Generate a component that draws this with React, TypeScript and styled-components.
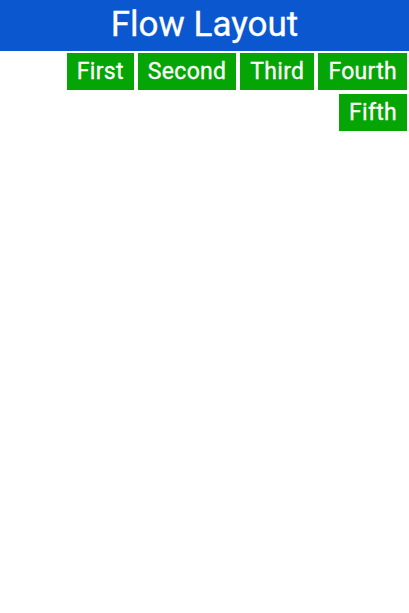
import React from "react";
import styled, { createGlobalStyle } from "styled-components";

const Global = createGlobalStyle`
  html, body { margin: 0; padding: 0; background: #ffffff; }
  body { font-family: Roboto, "Noto Sans", sans-serif; }
`;

const Header = styled.header`
  height: 51px;
  background: #0b57d0;
  color: #ffffff;
  display: flex;
  align-items: center;
  justify-content: center;
  font-size: 35px;
  font-weight: 400;
  line-height: 1;
  padding-bottom: 2px;
  box-sizing: border-box;
  -webkit-text-stroke: 0.3px #ffffff;
`;

const Flow = styled.div`
  display: flex;
  flex-wrap: wrap;
  justify-content: flex-end;
  padding: 0;
`;

const Item = styled.div`
  margin: 2px;
  height: 37px;
  padding: 0 10px;
  box-sizing: border-box;
  background: #05a505;
  color: #ffffff;
  font-size: 23px;
  letter-spacing: 0.3px;
  font-weight: 400;
  line-height: 1;
  display: flex;
  align-items: center;
  -webkit-text-stroke: 0.3px #ffffff;
`;

const items = ["First", "Second", "Third", "Fourth", "Fifth"];

export default function App() {
  return (
    <>
      <Global />
      <Header>Flow Layout</Header>
      <Flow>
        {items.map((t) => (
          <Item key={t}>{t}</Item>
        ))}
      </Flow>
    </>
  );
}
